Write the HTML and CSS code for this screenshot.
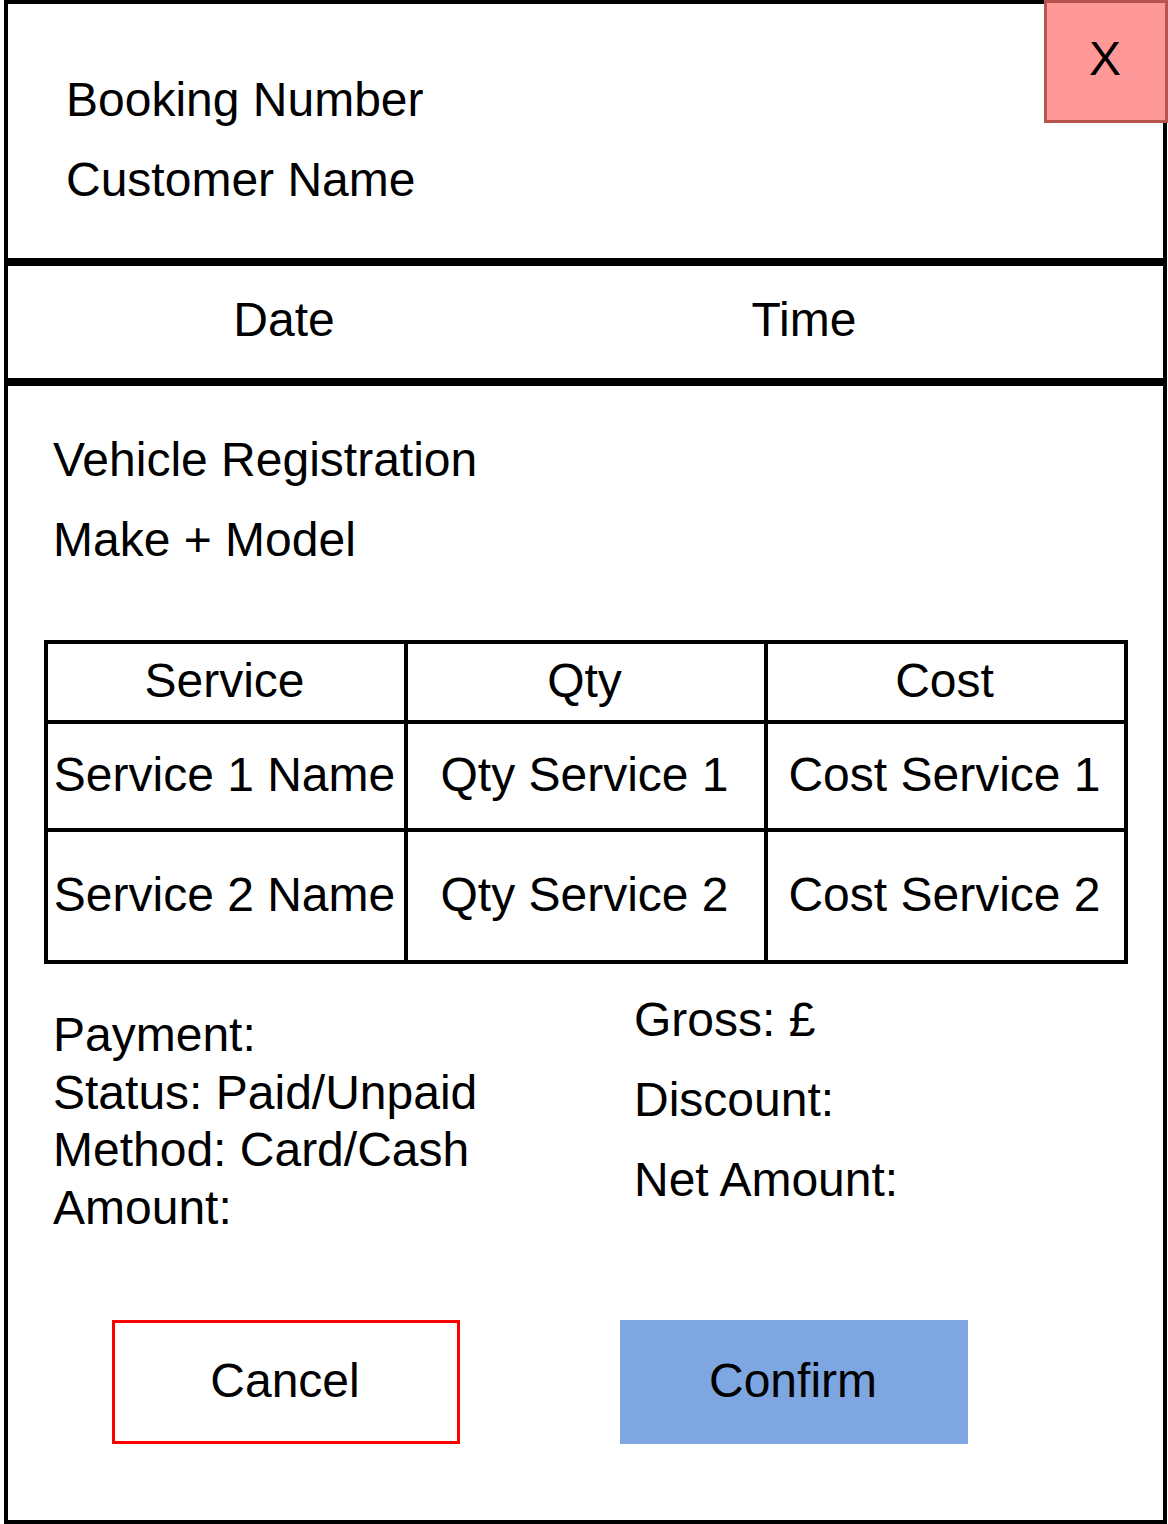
FILE: index.html
```html
<!DOCTYPE html>
<html lang="en">
<head>
<meta charset="utf-8">
<title>Booking Details</title>
<link rel="stylesheet" href="styles.css">
</head>
<body>
<div class="frame">
  <button class="close-btn">X</button>
  <header class="header">
    <div class="line">Booking Number</div>
    <div class="line">Customer Name</div>
  </header>
  <div class="datetime">
    <div class="date">Date</div>
    <div class="time">Time</div>
  </div>
  <main class="body">
    <div class="vehicle">
      <div class="line">Vehicle Registration</div>
      <div class="line">Make + Model</div>
    </div>
    <div class="services">
      <div class="cell head">Service</div>
      <div class="cell head">Qty</div>
      <div class="cell head">Cost</div>
      <div class="cell r1">Service 1 Name</div>
      <div class="cell r1">Qty Service 1</div>
      <div class="cell r1">Cost Service 1</div>
      <div class="cell r2">Service 2 Name</div>
      <div class="cell r2">Qty Service 2</div>
      <div class="cell r2">Cost Service 2</div>
    </div>
    <div class="summary">
      <div class="payment">
        <div>Payment:</div>
        <div>Status: Paid/Unpaid</div>
        <div>Method: Card/Cash</div>
        <div>Amount:</div>
      </div>
      <div class="totals">
        <div class="line">Gross: £</div>
        <div class="line">Discount:</div>
        <div class="line">Net Amount:</div>
      </div>
    </div>
    <div class="actions">
      <button class="btn cancel">Cancel</button>
      <button class="btn confirm">Confirm</button>
    </div>
  </main>
</div>
</body>
</html>
```

FILE: styles.css
```css
* { box-sizing: border-box; }

html, body {
  margin: 0;
  padding: 0;
  background: #ffffff;
}

body {
  font-family: "Liberation Sans", Arial, sans-serif;
  font-size: 48px;
  color: #000;
  width: 1168px;
  height: 1524px;
  overflow: hidden;
}

.frame {
  position: relative;
  margin-left: 4px;
  width: 1163px;
  height: 1524px;
  border: 4px solid #000;
  display: flex;
  flex-direction: column;
}

.close-btn {
  position: absolute;
  top: -4px;
  right: -5px;
  width: 124px;
  height: 123px;
  background: #ff9999;
  border: 3px solid #b85450;
  font-family: "Liberation Sans", Arial, sans-serif;
  font-size: 48px;
  color: #000;
  padding: 0 2px 6px 0;
  display: flex;
  align-items: center;
  justify-content: center;
}

.line {
  height: 80px;
  line-height: 80px;
  white-space: nowrap;
}

.header {
  height: 262px;
  padding: 56px 0 0 58px;
  border-bottom: 8px solid #000;
}

.datetime {
  height: 120px;
  display: flex;
  align-items: center;
  padding-bottom: 5px;
  border-bottom: 8px solid #000;
}

.date {
  width: 552px;
  text-align: center;
}

.time {
  width: 488px;
  text-align: center;
}

.body {
  flex: 1;
  padding-top: 34px;
}

.vehicle {
  padding-left: 45px;
}

.services {
  margin: 60px 0 0 36px;
  width: 1084px;
  display: grid;
  grid-template-columns: 356px 356px 356px;
  grid-template-rows: 76px 104px 128px;
  gap: 4px;
  padding: 4px;
  background: #000;
}

.cell {
  background: #fff;
  display: flex;
  align-items: center;
  justify-content: center;
  white-space: nowrap;
  padding: 0 3px 4px 0;
}

.summary {
  display: flex;
  align-items: flex-start;
  padding-left: 45px;
}

.payment {
  width: 581px;
  padding-top: 42px;
  line-height: 57.5px;
  white-space: nowrap;
}

.totals {
  padding-top: 16px;
}

.actions {
  margin-top: 84px;
  padding-left: 104px;
  display: flex;
  gap: 160px;
}

.btn {
  width: 348px;
  height: 124px;
  font-family: "Liberation Sans", Arial, sans-serif;
  font-size: 48px;
  color: #000;
  padding: 0 2px 4px 0;
  display: flex;
  align-items: center;
  justify-content: center;
}

.cancel {
  background: #fff;
  border: 3px solid #ff0000;
}

.confirm {
  background: #7ea6e0;
  border: none;
}
```
